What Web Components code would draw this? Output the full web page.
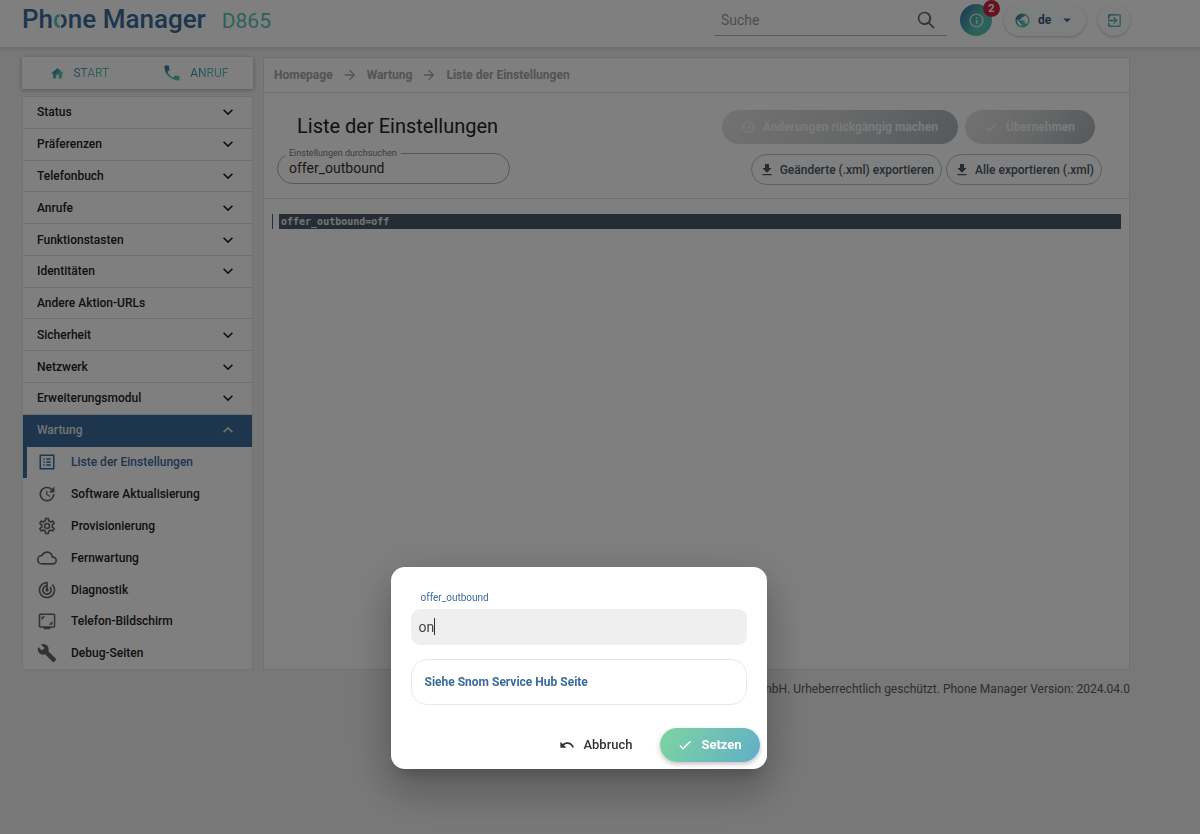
<!DOCTYPE html>
<html lang="de">
<head>
<meta charset="utf-8">
<title>Phone Manager D865</title>
<style>
  html, body { margin: 0; min-height: 100%; }
  body {
    --blue: #3b6b9a;
    --teal: #58c4b4;
    --line: #dcdcdc;
    --text: #222;
    --slate: #4a5866;
    background: #f0f0f0;
    color: var(--text);
    font: 500 12px/16px Roboto, "Liberation Sans", sans-serif;
  }
</style>
</head>
<body>
<phone-manager></phone-manager>

<script>
const ICONS = {
  home: 'M10,20V14H14V20H19V12H22L12,3L2,12H5V20H10Z',
  phone: 'M6.62,10.79C8.06,13.62 10.38,15.94 13.21,17.38L15.41,15.18C15.69,14.9 16.08,14.82 16.43,14.93C17.55,15.3 18.75,15.5 20,15.5A1,1 0 0,1 21,16.5V20A1,1 0 0,1 20,21A17,17 0 0,1 3,4A1,1 0 0,1 4,3H7.5A1,1 0 0,1 8.5,4C8.5,5.25 8.7,6.45 9.07,7.57C9.18,7.92 9.1,8.31 8.82,8.59L6.62,10.79Z',
  down: 'M7.41,8.58L12,13.17L16.59,8.58L18,10L12,16L6,10L7.41,8.58Z',
  up: 'M7.41,15.41L12,10.83L16.59,15.41L18,14L12,8L6,14Z',
  info: 'M11,9H13V7H11M12,20C7.59,20 4,16.41 4,12C4,7.59 7.59,4 12,4C16.41,4 20,7.59 20,12C20,16.41 16.41,20 12,20M12,2A10,10 0 0,0 2,12A10,10 0 0,0 12,22A10,10 0 0,0 22,12A10,10 0 0,0 12,2M11,17H13V11H11V17Z',
  earth: 'M17.9,17.39C17.64,16.59 16.89,16 16,16H15V13A1,1 0 0,0 14,12H8V10H10A1,1 0 0,0 11,9V7H13A2,2 0 0,0 15,5V4.59C17.93,5.77 20,8.64 20,12C20,14.08 19.2,15.97 17.9,17.39M11,19.93C7.05,19.44 4,16.08 4,12C4,11.38 4.08,10.78 4.21,10.21L9,15V16A2,2 0 0,0 11,18M12,2A10,10 0 0,0 2,12A10,10 0 0,0 12,22A10,10 0 0,0 22,12A10,10 0 0,0 12,2Z',
  caret: 'M7,10L12,15L17,10H7Z',
  exit: 'M19,3H5C3.89,3 3,3.89 3,5V9H5V5H19V19H5V15H3V19A2,2 0 0,0 5,21H19A2,2 0 0,0 21,19V5C21,3.89 20.1,3 19,3M10.08,15.58L11.5,17L16.5,12L11.5,7L10.08,8.41L12.67,11H3V13H12.67L10.08,15.58Z',
  arrow: 'M4,11V13H16L10.5,18.5L11.92,19.92L19.84,12L11.92,4.08L10.5,5.5L16,11H4Z',
  history: 'M13.5,8H12V13L16.28,15.54L17,14.33L13.5,12.25V8M13,3A9,9 0 0,0 4,12H1L4.96,16.03L9,12H6A7,7 0 0,1 13,5A7,7 0 0,1 20,12A7,7 0 0,1 13,19C11.07,19 9.32,18.21 8.06,16.94L6.64,18.36C8.27,20 10.5,21 13,21A9,9 0 0,0 22,12A9,9 0 0,0 13,3',
  check: 'M21,7L9,19L3.5,13.5L4.91,12.09L9,16.17L19.59,5.59L21,7Z',
  download: 'M5,20H19V18H5M19,9H15V3H9V9H5L12,16L19,9Z',
  list: 'M11 15H17V17H11V15M9 7H7V9H9V7M11 13H17V11H11V13M11 9H17V7H11V9M9 11H7V13H9V11M22 2V22H2V2H22M20 4H4V20H20V4M9 15H7V17H9V15Z',
  update: 'M21,10.12H14.22L16.96,7.3C14.23,4.6 9.81,4.5 7.08,7.2C4.35,9.91 4.35,14.28 7.08,17C9.81,19.7 14.23,19.7 16.96,17C18.32,15.65 19,14.08 19,12.1H21C21,14.08 20.12,16.65 18.36,18.39C14.85,21.87 9.15,21.87 5.64,18.39C2.14,14.92 2.11,9.28 5.62,5.81C9.13,2.34 14.76,2.34 18.27,5.81L21,3V10.12M12.5,8V12.25L16,14.33L15.28,15.54L11,13V8H12.5Z',
  cog: 'M12,8A4,4 0 0,1 16,12A4,4 0 0,1 12,16A4,4 0 0,1 8,12A4,4 0 0,1 12,8M12,10A2,2 0 0,0 10,12A2,2 0 0,0 12,14A2,2 0 0,0 14,12A2,2 0 0,0 12,10M10,22C9.75,22 9.54,21.82 9.5,21.58L9.13,18.93C8.5,18.68 7.96,18.34 7.44,17.94L4.95,18.95C4.73,19.03 4.46,18.95 4.34,18.73L2.34,15.27C2.21,15.05 2.27,14.78 2.46,14.63L4.57,12.97L4.5,12L4.57,11L2.46,9.37C2.27,9.22 2.21,8.95 2.34,8.73L4.34,5.27C4.46,5.05 4.73,4.96 4.95,5.05L7.44,6.05C7.96,5.66 8.5,5.32 9.13,5.07L9.5,2.42C9.54,2.18 9.75,2 10,2H14C14.25,2 14.46,2.18 14.5,2.42L14.87,5.07C15.5,5.32 16.04,5.66 16.56,6.05L19.05,5.05C19.27,4.96 19.54,5.05 19.66,5.27L21.66,8.73C21.79,8.95 21.73,9.22 21.54,9.37L19.43,11L19.5,12L19.43,13L21.54,14.63C21.73,14.78 21.79,15.05 21.66,15.27L19.66,18.73C19.54,18.95 19.27,19.04 19.05,18.95L16.56,17.95C16.04,18.34 15.5,18.68 14.87,18.93L14.5,21.58C14.46,21.82 14.25,22 14,22H10M11.25,4L10.88,6.61C9.68,6.86 8.62,7.5 7.85,8.39L5.44,7.35L4.69,8.65L6.8,10.2C6.4,11.37 6.4,12.64 6.8,13.8L4.68,15.36L5.43,16.66L7.86,15.62C8.63,16.5 9.68,17.14 10.87,17.38L11.24,20H12.76L13.13,17.39C14.32,17.14 15.37,16.5 16.14,15.62L18.57,16.66L19.32,15.36L17.2,13.81C17.6,12.64 17.6,11.37 17.2,10.2L19.31,8.65L18.56,7.35L16.15,8.39C15.38,7.5 14.32,6.86 13.12,6.62L12.75,4H11.25Z',
  cloud: 'M19,18H6A4,4 0 0,1 2,14A4,4 0 0,1 6,10H6.71C7.37,7.69 9.5,6 12,6A5.5,5.5 0 0,1 17.5,11.5V12H19A3,3 0 0,1 22,15A3,3 0 0,1 19,18M19.35,10.03C18.67,6.59 15.64,4 12,4C9.11,4 6.6,5.64 5.35,8.03C2.34,8.36 0,10.9 0,14A6,6 0 0,0 6,20H19A5,5 0 0,0 24,15C24,12.36 21.95,10.22 19.35,10.03Z',
  radar: 'M19.07 4.93l-1.41 1.41C19.1 7.79 20 9.79 20 12c0 4.42-3.58 8-8 8s-8-3.58-8-8c0-4.08 3.05-7.44 7-7.93v2.02C8.16 6.57 6 9.03 6 12c0 3.31 2.69 6 6 6s6-2.69 6-6c0-1.66-.67-3.16-1.76-4.24l-1.41 1.41C15.55 9.9 16 10.9 16 12c0 2.21-1.79 4-4 4s-4-1.79-4-4c0-1.86 1.28-3.41 3-3.86v2.14c-.6.35-1 .98-1 1.72 0 1.1.9 2 2 2s2-.9 2-2c0-.74-.4-1.38-1-1.72V2h-1C6.48 2 2 6.48 2 12s4.48 10 10 10 10-4.48 10-10c0-2.76-1.12-5.26-2.93-7.07z',
  screen: 'M4 3H20A2 2 0 0 1 22 5V18A2 2 0 0 1 20 20H16V22H8V20H4A2 2 0 0 1 2 18V5A2 2 0 0 1 4 3M4 4.8V18.2H20.2V4.8H4M5.5 6.5H10L5.5 11V6.5M18.5 16.5H14L18.5 12V16.5Z',
  wrench: 'M22.7,19L13.6,9.9C14.5,7.6 14,4.9 12.1,3C10.1,1 7.1,0.6 4.7,1.7L9,6L6,9L1.6,4.7C0.4,7.1 0.9,10.1 2.9,12.1C4.8,14 7.5,14.5 9.8,13.6L18.9,22.7C19.3,23.1 19.9,23.1 20.3,22.7L22.6,20.4C23.1,20 23.1,19.3 22.7,19Z',
  undo: 'M12.5,8C9.85,8 7.45,9 5.6,10.6L2,7V16H11L7.38,12.38C8.77,11.22 10.54,10.5 12.5,10.5C16.04,10.5 19.05,12.81 20.1,16L22.47,15.22C21.08,11.03 17.15,8 12.5,8Z',
  search: 'M10 2A8 8 0 1 0 15 16.4L21 22.4L22.4 21L16.4 15A8 8 0 0 0 10 2M10 4A6 6 0 1 1 10 16A6 6 0 1 1 10 4Z'
};

function define(tag, html, ready) {
  const template = document.createElement('template');
  template.innerHTML = html;
  customElements.define(tag, class extends HTMLElement {
    constructor() {
      super();
      this.attachShadow({ mode: 'open' }).append(template.content.cloneNode(true));
    }
    connectedCallback() { if (ready) ready(this, this.shadowRoot); }
  });
}

/* <pm-icon name size gradient> */
define('pm-icon', `
  <style>
    :host { display: inline-flex; flex: none; }
    svg { display: block; fill: currentColor; }
    :host([gradient]) path { fill: url(#g); }
    .from { stop-color: var(--blue); } .to { stop-color: var(--teal); }
  </style>
  <svg viewBox="0 0 24 24" aria-hidden="true">
    <defs><linearGradient id="g" x1="0" y1="0.2" x2="0.6" y2="0.6"><stop class="from"/><stop class="to" offset="1"/></linearGradient></defs>
    <path fill-rule="evenodd"/>
  </svg>`, (host, root) => {
  const size = host.getAttribute('size') || 20;
  const svg = root.querySelector('svg');
  svg.setAttribute('width', size);
  svg.setAttribute('height', size);
  root.querySelector('path').setAttribute('d', ICONS[host.getAttribute('name')]);
});

/* <pm-button icon variant disabled> */
define('pm-button', `
  <style>
    :host { display: inline-flex; }
    button {
      display: flex; align-items: center; justify-content: center; gap: 8px;
      box-sizing: border-box; height: 34px; padding: 0; border: 0; border-radius: 17px;
      background: none; color: #333; font: 500 13px/16px Roboto, sans-serif; white-space: nowrap;
    }
    :host([variant=primary]) button {
      width: 100px; color: #fff; font-weight: 700;
      background: linear-gradient(120deg, #7dd5a1, #62aec8);
      box-shadow: 0 2px 5px rgba(0,0,0,.25);
    }
    :host([variant=outline]) button {
      gap: 5px; height: 31px; padding: 0 7px; border: 1px solid #b9c0c2; color: var(--slate); font-size: 12px;
    }
    :host([disabled]) button {
      gap: 7px; padding: 0 20px 0 18px; color: #f4f4f4; font-size: 12px; font-weight: 700;
      background: linear-gradient(120deg, #e4e4e4, #cfd1d2 50%, #a9b3bb);
    }
  </style>
  <button type="button"><pm-icon></pm-icon><slot></slot></button>`, (host, root) => {
  root.querySelector('button').disabled = host.hasAttribute('disabled');
  const icon = document.createElement('pm-icon');
  icon.setAttribute('name', host.getAttribute('icon'));
  icon.setAttribute('size', 16);
  root.querySelector('pm-icon').replaceWith(icon);
});

define('pm-header', `
  <style>
    :host {
      display: flex; align-items: flex-start; justify-content: space-between;
      box-sizing: border-box; height: 48px; padding: 0 70px 0 22px;
      background: #fff; border-bottom: 1px solid #d9d9d9; box-shadow: 0 1px 3px rgba(0,0,0,.12);
    }
    h1 { display: flex; align-items: baseline; gap: 16px; margin: 3px 0 0; font-size: 26px; line-height: 32px; font-weight: 500; color: var(--blue); }
    .o { color: transparent; background: linear-gradient(90deg, var(--teal) 44%, #fff 44%, #fff 54%, var(--blue) 54%); -webkit-background-clip: text; background-clip: text; }
    .model { font-size: 21px; font-weight: 400; color: var(--teal); }
    .tools { display: flex; align-items: center; padding-top: 4px; }
    label { display: flex; align-items: center; box-sizing: border-box; width: 232px; height: 32px; padding: 0 11px 0 6px; margin-right: 13px; border-bottom: 1px solid #b4b4b4; color: #666; }
    input { flex: 1; min-width: 0; padding: 0; border: 0; outline: 0; background: none; font: 400 14px/20px Roboto, sans-serif; }
    input::placeholder { color: #9a9a9a; opacity: 1; }
    button { position: relative; display: grid; place-items: center; width: 32px; height: 32px; padding: 0; border: 0; border-radius: 16px; }
    .info { color: #e3f1ef; background: linear-gradient(120deg, var(--blue), var(--teal) 60%); }
    .badge { position: absolute; top: -4px; right: -8px; width: 17px; height: 17px; border-radius: 9px; background: #cf2440; color: #fff; font: 700 11px/17px Roboto, sans-serif; }
    .lang { display: flex; align-items: center; box-sizing: border-box; width: 82px; height: 32px; margin: 0 12px; padding: 0 10px; border-radius: 16px; color: var(--blue); }
    .lang, .exit { background: #fafcfc; box-shadow: 0 1px 3px rgba(0,0,0,.22); }
    select { appearance: none; flex: 1; min-width: 0; padding: 0 0 0 7px; border: 0; background: none; color: #35577c; font: 700 12px/16px Roboto, sans-serif; }
  </style>
  <h1><span>Ph<span class="o">o</span>ne Manager</span><span class="model">D865</span></h1>
  <div class="tools">
    <label><input type="search" placeholder="Suche" aria-label="Suche"><pm-icon name="search" size="20"></pm-icon></label>
    <button class="info" aria-label="Hinweise"><pm-icon name="info" size="17"></pm-icon><span class="badge">2</span></button>
    <div class="lang"><pm-icon name="earth" size="17" gradient></pm-icon><select aria-label="Sprache"><option>de</option></select><pm-icon name="caret" size="18"></pm-icon></div>
    <button class="exit" aria-label="Abmelden"><pm-icon name="exit" size="17" gradient></pm-icon></button>
  </div>`);

define('pm-tabs', `
  <style>
    :host { display: flex; height: 32px; background: #fff; box-shadow: 0 1px 4px rgba(0,0,0,.3); }
    a { flex: 1; display: flex; align-items: center; justify-content: center; gap: 8px; text-decoration: none; font-weight: 400; }
    span { color: transparent; background: linear-gradient(120deg, var(--blue), var(--teal) 50%); -webkit-background-clip: text; background-clip: text; }
  </style>
  <a href="#start"><pm-icon name="home" size="15" gradient></pm-icon><span>START</span></a>
  <a href="#anruf"><pm-icon name="phone" size="20" gradient></pm-icon><span>ANRUF</span></a>`);

/* one row of the main menu */
define('pm-entry', `
  <style>
    :host { display: grid; border-bottom: 1px solid var(--line); }
    a { display: flex; align-items: center; justify-content: space-between; padding: 0 14px; color: inherit; text-decoration: none; }
    :host([open]) { background: var(--blue); border-color: var(--blue); color: #e4e9ee; }
  </style>
  <a href="#"><slot></slot></a>`, (host, root) => {
  if (host.hasAttribute('leaf')) return;
  const icon = document.createElement('pm-icon');
  icon.setAttribute('name', host.hasAttribute('open') ? 'up' : 'down');
  root.querySelector('a').append(icon);
});

/* one row of the open submenu */
define('pm-subentry', `
  <style>
    :host { display: grid; border-left: 4px solid transparent; }
    a { display: grid; grid-template-columns: 20px 1fr; align-items: center; gap: 14px; padding-left: 10px; color: inherit; text-decoration: none; }
    pm-icon { color: #666; justify-content: center; }
    :host([current]) { border-color: var(--blue); color: var(--blue); }
    :host([current]) pm-icon { color: var(--blue); }
  </style>
  <a href="#"><pm-icon></pm-icon><span><slot></slot></span></a>`, (host, root) => {
  const icon = document.createElement('pm-icon');
  icon.setAttribute('name', host.getAttribute('icon'));
  icon.setAttribute('size', host.getAttribute('size') || 20);
  root.querySelector('pm-icon').replaceWith(icon);
});

define('pm-menu', `
  <style>
    :host { display: flex; flex-direction: column; min-height: 574px; background: #fff; border: 1px solid #e4e4e4; box-sizing: border-box; }
    .top { flex: 11; display: grid; grid-auto-rows: 1fr; }
    .sub { flex: 7; display: grid; grid-auto-rows: 1fr; }
  </style>
  <nav class="top" aria-label="Hauptmenü">
    <pm-entry>Status</pm-entry><pm-entry>Präferenzen</pm-entry><pm-entry>Telefonbuch</pm-entry>
    <pm-entry>Anrufe</pm-entry><pm-entry>Funktionstasten</pm-entry><pm-entry>Identitäten</pm-entry>
    <pm-entry leaf>Andere Aktion-URLs</pm-entry><pm-entry>Sicherheit</pm-entry><pm-entry>Netzwerk</pm-entry>
    <pm-entry>Erweiterungsmodul</pm-entry><pm-entry open>Wartung</pm-entry>
  </nav>
  <nav class="sub" aria-label="Wartung">
    <pm-subentry icon="list" size="18" current>Liste der Einstellungen</pm-subentry>
    <pm-subentry icon="update">Software Aktualisierung</pm-subentry>
    <pm-subentry icon="cog">Provisionierung</pm-subentry>
    <pm-subentry icon="cloud">Fernwartung</pm-subentry>
    <pm-subentry icon="radar">Diagnostik</pm-subentry>
    <pm-subentry icon="screen">Telefon-Bildschirm</pm-subentry>
    <pm-subentry icon="wrench">Debug-Seiten</pm-subentry>
  </nav>`);

define('pm-settings', `
  <style>
    :host { display: flex; flex-direction: column; background: #fff; border: 1px solid #e0e0e0; box-sizing: border-box; }
    .crumbs { display: flex; align-items: center; gap: 9px; height: 34px; padding-left: 10px; border-bottom: 1px solid var(--line); color: #a3a8aa; font-weight: 700; }
    .crumbs a { color: inherit; text-decoration: none; }
    .head { display: flex; justify-content: space-between; align-items: flex-start; height: 88px; padding: 17px 27px 0 13px; border-bottom: 1px solid var(--line); }
    h2 { margin: 3px 0 0 20px; font-size: 20px; line-height: 26px; font-weight: 400; }
    fieldset { box-sizing: border-box; width: 233px; height: 38px; margin: 7px 0 0; padding: 0 11px; border: 1px solid #a9b0b2; border-radius: 16px; min-width: 0; }
    legend { margin-left: -4px; padding: 0 4px; font-size: 9px; line-height: 14px; font-weight: 400; color: #777; }
    input { display: block; width: 100%; padding: 0; margin: 0; border: 0; outline: 0; background: none; color: #333; font: 400 14px/16px Roboto, sans-serif; }
    .actions { display: grid; gap: 10px; }
    .actions div { display: flex; justify-content: flex-end; gap: 4px; }
    .actions .main { gap: 7px; padding-right: 7px; }
    .result { margin: 15px 8px; padding-left: 6px; border-left: 1px solid var(--slate); }
    code { display: block; padding-left: 2px; background: var(--slate); color: #e6e9ea; font: 700 10px/15px "DejaVu Sans Mono", monospace; }
  </style>
  <nav class="crumbs" aria-label="Pfad"><a href="#">Homepage</a><pm-icon name="arrow" size="16"></pm-icon><a href="#">Wartung</a><pm-icon name="arrow" size="16"></pm-icon><a href="#">Liste der Einstellungen</a></nav>
  <div class="head">
    <div>
      <h2>Liste der Einstellungen</h2>
      <fieldset><legend><label for="q">Einstellungen durchsuchen</label></legend><input id="q" value="offer_outbound"></fieldset>
    </div>
    <div class="actions">
      <div class="main"><pm-button disabled icon="history">Änderungen rückgängig machen</pm-button><pm-button disabled icon="check">Übernehmen</pm-button></div>
      <div><pm-button variant="outline" icon="download">Geänderte (.xml) exportieren</pm-button><pm-button variant="outline" icon="download">Alle exportieren (.xml)</pm-button></div>
    </div>
  </div>
  <div class="result"><code>offer_outbound=off</code></div>`);

/* modal dialog over the dimmed page */
define('pm-dialog', `
  <style>
    :host {
      position: fixed; inset: 0; display: flex; justify-content: center; align-items: flex-end;
      box-sizing: border-box; padding: 0 43px 65px 0; background: rgba(0,0,0,.5);
    }
    form {
      display: flex; flex-direction: column; box-sizing: border-box; width: 376px; padding: 24px 7px 7px 20px;
      border-radius: 14px; background: #fff;
      box-shadow: 0 11px 15px -7px rgba(0,0,0,.2), 0 24px 38px 3px rgba(0,0,0,.14), 0 9px 46px 8px rgba(0,0,0,.12);
    }
    label { padding-left: 10px; font-size: 10px; line-height: 14px; font-weight: 400; color: var(--blue); }
    /* the text cursor is a steady bar behind the end of the value */
    input {
      box-sizing: border-box; height: 36px; margin: 4px 13px 14px 0; padding: 0 8px; border: 0; border-radius: 9px; outline: 0;
      background: linear-gradient(#333, #333) 23px 9px / 1px 17px no-repeat #efefef;
      caret-color: transparent; color: #444; font: 400 14px/20px Roboto, sans-serif;
    }
    .hub { display: block; box-sizing: border-box; margin-right: 13px; padding: 14px 13px; border: 1px solid #e8e8e8; border-radius: 16px; color: var(--blue); font-weight: 700; line-height: 16px; text-decoration: none; }
    .buttons { display: flex; justify-content: flex-end; gap: 27px; margin-top: 23px; }
  </style>
  <form role="dialog" aria-modal="true" aria-labelledby="name">
    <label id="name" for="value">offer_outbound</label>
    <input id="value" value="on">
    <a class="hub" href="#hub">Siehe Snom Service Hub Seite</a>
    <div class="buttons">
      <pm-button icon="undo">Abbruch</pm-button>
      <pm-button variant="primary" icon="check">Setzen</pm-button>
    </div>
  </form>`);

define('phone-manager', `
  <style>
    :host { display: block; }
    main { display: grid; grid-template-columns: 231px minmax(0, 1fr); gap: 10px; padding: 9px 70px 0 22px; }
    aside { display: flex; flex-direction: column; gap: 7px; }
    footer { padding: 11px 70px 0 0; text-align: right; font-weight: 400; color: #555f63; }
  </style>
  <pm-header></pm-header>
  <main>
    <aside><pm-tabs></pm-tabs><pm-menu></pm-menu></aside>
    <pm-settings></pm-settings>
  </main>
  <footer>GmbH. Urheberrechtlich geschützt. Phone Manager Version: 2024.04.0</footer>
  <pm-dialog></pm-dialog>`);
</script>
</body>
</html>
